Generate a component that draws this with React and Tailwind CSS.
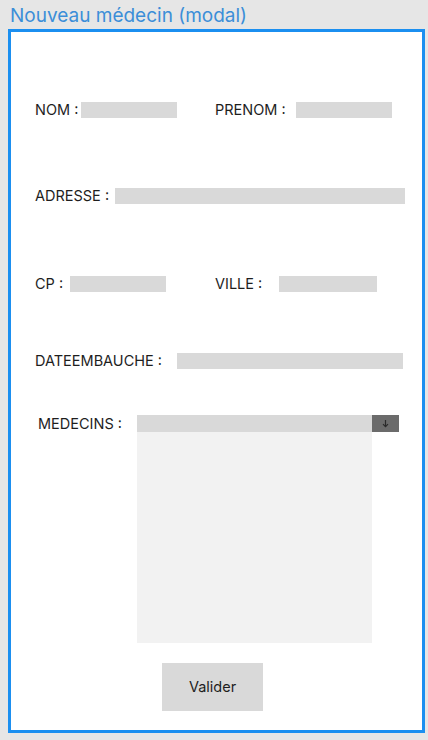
export default function App() {
  const font = { fontFamily: 'Inter, "Liberation Sans", sans-serif' }

  return (
    <div className="w-[428px] h-[740px] bg-[#e6e6e6] overflow-hidden" style={font}>
      <div className="pl-[10px] pt-[5px] h-[29px] text-[19px] leading-[22px] text-[#3b8ed8]">
        Nouveau médecin (modal)
      </div>

      <div className="ml-[8px] w-[417px] h-[704px] border-[3px] border-[#1b8ff0] bg-white flex flex-col text-[14.5px] text-[#1e1e1e]">
        {/* NOM / PRENOM */}
        <div className="mt-[70px] pl-[24px] h-[16px] flex items-center">
          <span className="w-[46px]">NOM :</span>
          <div className="w-[96px] h-[16px] bg-[#d9d9d9]" />
          <span className="ml-[38px] w-[81px]">PRENOM :</span>
          <div className="w-[96px] h-[16px] bg-[#d9d9d9]" />
        </div>

        {/* ADRESSE */}
        <div className="mt-[70px] pl-[24px] h-[16px] flex items-center">
          <span className="w-[80px]">ADRESSE :</span>
          <div className="w-[290px] h-[16px] bg-[#d9d9d9]" />
        </div>

        {/* CP / VILLE */}
        <div className="mt-[72px] pl-[24px] h-[16px] flex items-center">
          <span className="w-[35px]">CP :</span>
          <div className="w-[96px] h-[16px] bg-[#d9d9d9]" />
          <span className="ml-[49px] w-[64px]">VILLE :</span>
          <div className="w-[98px] h-[16px] bg-[#d9d9d9]" />
        </div>

        {/* DATEEMBAUCHE */}
        <div className="mt-[61px] pl-[24px] h-[16px] flex items-center">
          <span className="w-[142px]">DATEEMBAUCHE :</span>
          <div className="w-[226px] h-[16px] bg-[#d9d9d9]" />
        </div>

        {/* MEDECINS */}
        <div className="mt-[46px] pl-[27px] flex">
          <span className="w-[99px] h-[17px] leading-[17px]">MEDECINS :</span>
          <div className="flex flex-col">
            <div className="flex h-[17px]">
              <div className="w-[235px] bg-[#d9d9d9]" />
              <div className="w-[27px] bg-[#6b6b6b] flex items-center justify-center">
                <svg width="9" height="9" viewBox="0 0 9 9" fill="none" stroke="#2a2a2a" strokeWidth="1.2">
                  <path d="M4.5 1v6.5" />
                  <path d="M2 5.2l2.5 2.5 2.5-2.5" />
                </svg>
              </div>
            </div>
            <div className="w-[235px] h-[211px] bg-[#f2f2f2]" />
          </div>
        </div>

        <div className="mt-[20px] ml-[151px]">
          <button className="w-[101px] h-[48px] bg-[#d9d9d9] text-[14.5px] text-[#1e1e1e]">Valider</button>
        </div>
      </div>
    </div>
  )
}
